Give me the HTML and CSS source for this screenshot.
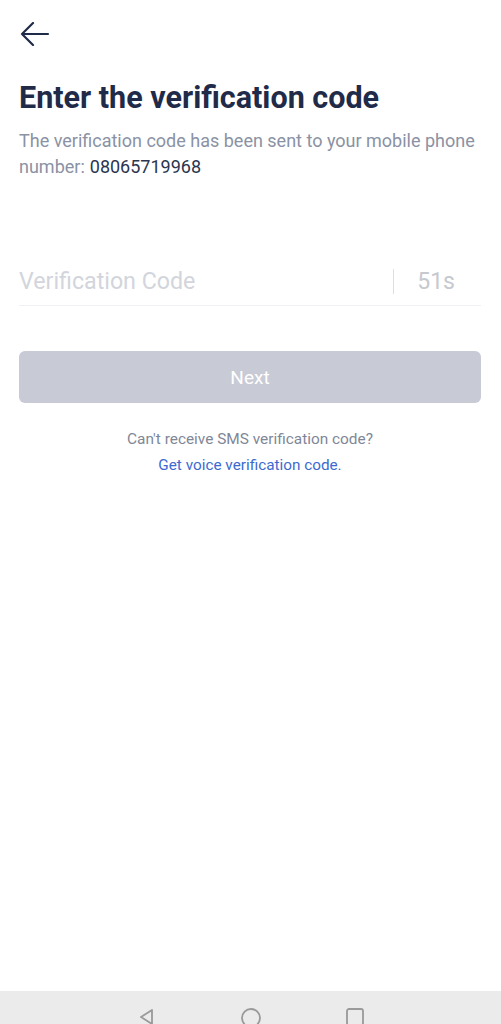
FILE: index.html
```html
<!DOCTYPE html>
<html>
<head>
  <meta charset="utf-8">
  <title>Enter the verification code</title>
  <link rel="stylesheet" href="styles.css">
</head>
<body>
  <div class="screen">
    <div class="topbar">
      <button class="back" aria-label="Back">
        <svg width="30" height="24" viewBox="0 0 30 24">
          <path d="M2 12 H28 M13 1 L2 12 L13 23" fill="none" stroke="#1f2b48" stroke-width="2.2" stroke-linecap="round" stroke-linejoin="round"/>
        </svg>
      </button>
    </div>

    <div class="content">
      <h1 class="title">Enter the verification code</h1>
      <div class="subtitle">
        <div>The verification code has been sent to your mobile phone</div>
        <div class="sub_line"><span>number:</span><span class="phone">08065719968</span></div>
      </div>

      <div class="code_field">
        <input class="code_input" type="text" placeholder="Verification Code">
        <span class="sep"></span>
        <span class="timer">51s</span>
      </div>

      <button class="next_btn">Next</button>

      <div class="help">
        <p class="help_text">Can't receive SMS verification code?</p>
        <a class="help_link" href="#">Get voice verification code.</a>
      </div>
    </div>

    <div class="navbar">
      <svg class="nav_icon" width="20" height="20" viewBox="0 0 20 20">
        <path d="M15 3 L4 10 L15 17 Z" fill="none" stroke="#9a9a9a" stroke-width="1.8" stroke-linejoin="round"/>
      </svg>
      <svg class="nav_icon" width="22" height="22" viewBox="0 0 22 22">
        <circle cx="11" cy="11" r="9" fill="none" stroke="#9a9a9a" stroke-width="1.8"/>
      </svg>
      <svg class="nav_icon" width="20" height="20" viewBox="0 0 20 20">
        <rect x="2" y="2" width="16" height="16" rx="2" fill="none" stroke="#9a9a9a" stroke-width="1.8"/>
      </svg>
    </div>
  </div>
</body>
</html>
```

FILE: styles.css
```css
html, body {
  margin: 0;
  padding: 0;
  background-color: #ffffff;
}
body {
  font-family: Roboto, "Liberation Sans", sans-serif;
  color: #1f2b48;
}
.screen {
  width: 501px;
  height: 1024px;
  display: flex;
  flex-direction: column;
  overflow: hidden;
}
.topbar {
  height: 68px;
  padding-left: 20px;
  display: flex;
  align-items: center;
}
.back {
  border: none;
  background: none;
  padding: 0;
  display: flex;
  cursor: pointer;
}
.content {
  flex: 1;
  padding: 0 20px 0 19px;
}
.title {
  margin: 12px 0 0;
  font-size: 30.5px;
  line-height: 36px;
  font-weight: 700;
  color: #1f2b48;
}
.subtitle {
  margin-top: 12px;
  font-size: 18px;
  line-height: 26px;
  color: #8a92a4;
  white-space: nowrap;
}
.sub_line {
  display: flex;
  gap: 5px;
}
.phone {
  color: #2a3550;
}
.code_field {
  margin-top: 78px;
  height: 46px;
  border-bottom: 1px solid #eef0f3;
  display: flex;
  align-items: center;
  padding-bottom: 1px;
}
.code_input {
  flex: 1;
  min-width: 0;
  border: none;
  outline: none;
  padding: 0;
  font-family: inherit;
  font-size: 23.2px;
  color: #1f2b48;
  background: transparent;
}
.code_input::placeholder {
  color: #d2d5dc;
}
.sep {
  width: 1.5px;
  height: 25px;
  background-color: #dcdee3;
  margin-right: 23px;
}
.timer {
  font-size: 23px;
  color: #c6c9d0;
  margin-right: 26px;
}
.next_btn {
  display: block;
  width: 100%;
  height: 52px;
  margin-top: 45px;
  border: none;
  border-radius: 6px;
  background-color: #c8cad6;
  color: #ffffff;
  font-family: inherit;
  font-size: 19px;
}
.help {
  margin-top: 23px;
  text-align: center;
}
.help_text {
  margin: 0;
  font-size: 15.4px;
  line-height: 26px;
  color: #7f8797;
}
.help_link {
  display: inline-block;
  font-size: 15.3px;
  line-height: 26px;
  color: #3d6ad0;
  text-decoration: none;
}
.navbar {
  height: 33px;
  background-color: #ebebeb;
  display: flex;
  justify-content: center;
  align-items: flex-start;
  gap: 83px;
  padding-top: 16px;
  box-sizing: border-box;
}
.nav_icon {
  flex: none;
}
```
